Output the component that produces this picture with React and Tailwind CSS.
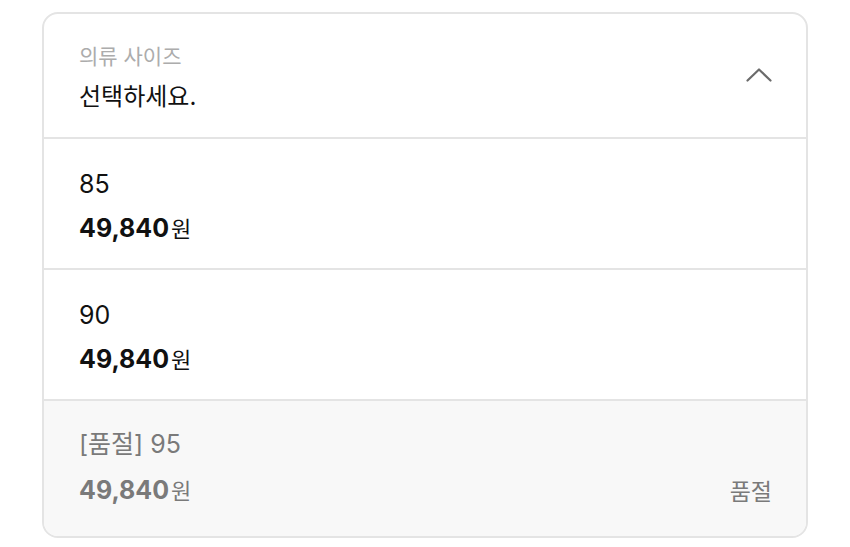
const options = [
  { label: "85", price: "49,840", soldOut: false },
  { label: "90", price: "49,840", soldOut: false },
  { label: "[품절] 95", price: "49,840", soldOut: true },
];

const ChevronUp = () => (
  <svg width="26" height="15" viewBox="0 0 26 15" fill="none">
    <path d="M1.5 13.5L13 2.5L24.5 13.5" stroke="#6b6b6b" strokeWidth="2.2" strokeLinecap="round" strokeLinejoin="round" />
  </svg>
);

export default function App() {
  return (
    <div
      className="w-[850px] h-[547px] bg-white pt-[12px] pl-[42px]"
      style={{ fontFamily: '"Inter", "Noto Sans CJK KR", sans-serif' }}
    >
      <div className="w-[766px] rounded-[16px] border-2 border-[#e4e4e4] overflow-hidden">
        {/* header */}
        <div className="h-[125px] flex items-center justify-between pl-[35px] pr-[34px] border-b-2 border-[#e4e4e4]">
          <div className="flex flex-col gap-[8px] mt-[3px]">
            <span className="text-[21px] leading-[32px] text-[#acacac]">의류 사이즈</span>
            <span className="text-[24px] leading-[32px] text-[#111]">선택하세요.</span>
          </div>
          <div className="pb-[2px]">
            <ChevronUp />
          </div>
        </div>

        {options.map((o) => (
          <div
            key={o.label}
            className={`${o.soldOut ? "bg-[#f8f8f8] h-[135px]" : "bg-white h-[131px] border-b-2 border-[#e4e4e4]"} flex items-center justify-between pl-[35px] pr-[34px]`}
          >
            <div className={`flex flex-col ${o.soldOut ? "gap-[12px]" : "gap-[10px] mt-[8px]"}`}>
              <span className={`text-[25px] leading-[34px] ${o.soldOut ? "text-[#7a7a7a]" : "text-[#111]"}`}>
                {o.label}
              </span>
              <span className={`leading-[34px] ${o.soldOut ? "text-[#7a7a7a]" : "text-[#111]"}`}>
                <span className="text-[25px] font-bold">{o.price}</span>
                <span className="text-[22px] ml-[2px]">원</span>
              </span>
            </div>
            {o.soldOut && (
              <span className="self-end mb-[27px] text-[23px] leading-[34px] text-[#7a7a7a]">품절</span>
            )}
          </div>
        ))}
      </div>
    </div>
  );
}
